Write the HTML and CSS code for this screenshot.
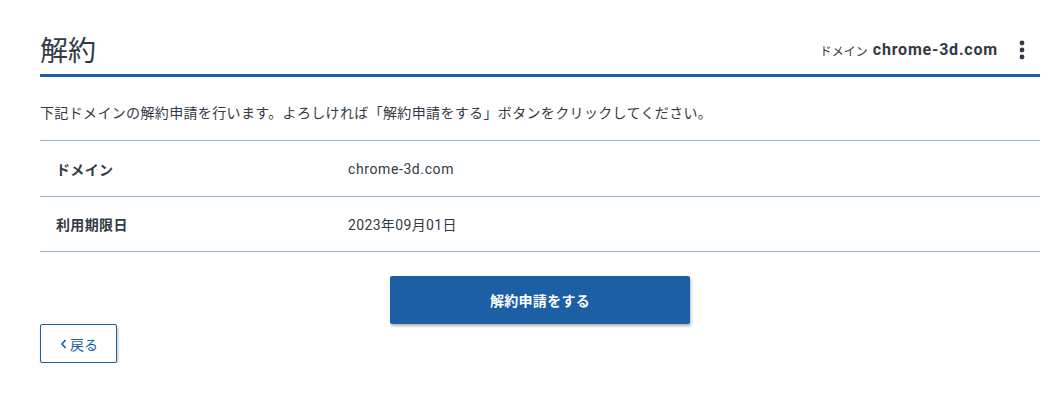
FILE: index.html
```html
<!DOCTYPE html>
<html lang="ja">

<head>
    <title>解約</title>
    <meta charset="utf-8">
    <meta name="viewport" content="width=device-width, initial-scale=1.0">
    <link rel="stylesheet" href="styles.css">
</head>

<body>

    <main class="page">
        <header class="page_head">
            <h1>解約</h1>
            <div class="head_domain">
                <span class="head_label">ドメイン</span>
                <span class="head_name">chrome-3d.com</span>
                <button class="menu" aria-label="メニュー">
                    <svg width="6" height="22" viewBox="0 0 6 22">
                        <circle cx="3" cy="4" r="2.4" fill="#333a44" />
                        <circle cx="3" cy="11" r="2.4" fill="#333a44" />
                        <circle cx="3" cy="18" r="2.4" fill="#333a44" />
                    </svg>
                </button>
            </div>
        </header>

        <p class="lead">下記ドメインの解約申請を行います。よろしければ「解約申請をする」ボタンをクリックしてください。</p>

        <table class="info">
            <tr>
                <th>ドメイン</th>
                <td class="domain">chrome-3d.com</td>
            </tr>
            <tr>
                <th class="last">利用期限日</th>
                <td>2023年09月01日</td>
            </tr>
        </table>

        <div class="actions">
            <button class="submit">解約申請をする</button>
        </div>

        <button class="back">
            <svg width="7" height="12" viewBox="0 0 7 12">
                <path d="M5.5 2 L2 6 L5.5 10" fill="none" stroke="#1c5fa5" stroke-width="1.7" />
            </svg>
            戻る
        </button>
    </main>

</body>

</html>
```

FILE: styles.css
```css
body {
    margin: 0;
    background-color: #ffffff;
    color: #333a44;
    font-family: "Roboto", "Noto Sans CJK JP", sans-serif;
    letter-spacing: 0.35px;
}

.page {
    width: 1000px;
    padding: 25px 20px 0 40px;
}

.page_head {
    display: flex;
    justify-content: space-between;
    align-items: center;
    border-bottom: 3px solid #1c5fa5;
    height: 49px;
}

h1 {
    margin: 0;
    font-size: 28px;
    font-weight: 400;
    line-height: 49px;
    letter-spacing: 0;
    font-family: "Noto Sans CJK JP", sans-serif;
}

.head_domain {
    display: flex;
    align-items: center;
    margin-right: 13px;
}

.head_label {
    font-size: 12px;
    letter-spacing: 0;
    font-family: "Noto Sans CJK JP", sans-serif;
    margin-right: 5px;
    margin-top: 2px;
}

.head_name {
    font-size: 16px;
    font-weight: 700;
    letter-spacing: 0.8px;
}

.menu {
    background-color: transparent;
    border: none;
    padding: 0;
    margin-left: 19px;
    width: 10px;
    height: 26px;
    display: flex;
    align-items: center;
    justify-content: center;
}

.lead {
    font-size: 14px;
    font-family: "Noto Sans CJK JP", sans-serif;
    margin: 23px 0 16px;
    line-height: 24px;
}

.info {
    width: 100%;
    border-collapse: collapse;
    font-size: 14px;
}

.info tr {
    border-top: 1px solid #9bb5cc;
    border-bottom: 1px solid #9bb5cc;
}

.info th {
    width: 292px;
    text-align: left;
    padding: 0 0 0 16px;
    height: 55px;
    font-weight: 700;
    font-family: "Noto Sans CJK JP", sans-serif;
}

.info th.last {
    height: 54px;
}

.info td {
    padding: 0;
    font-family: "Roboto", "Noto Sans CJK JP", sans-serif;
}

.info .domain {
    letter-spacing: 0.6px;
}

.actions {
    display: flex;
    justify-content: center;
    padding-top: 24px;
}

.submit {
    width: 300px;
    height: 48px;
    background-color: #1c5fa5;
    color: #ffffff;
    border: none;
    border-radius: 2px;
    box-shadow: 1px 2px 3px rgba(0, 0, 0, 0.3);
    font-size: 14px;
    font-weight: 700;
    letter-spacing: 0.3px;
    font-family: "Noto Sans CJK JP", sans-serif;
}

.back {
    display: flex;
    align-items: center;
    gap: 3px;
    width: 77px;
    height: 39px;
    padding: 0 0 0 19px;
    background-color: #ffffff;
    border: 1px solid #1c5fa5;
    border-radius: 2px;
    box-shadow: 1px 2px 3px rgba(0, 0, 0, 0.25);
    color: #1c5fa5;
    font-size: 14px;
    font-family: "Noto Sans CJK JP", sans-serif;
}
```
